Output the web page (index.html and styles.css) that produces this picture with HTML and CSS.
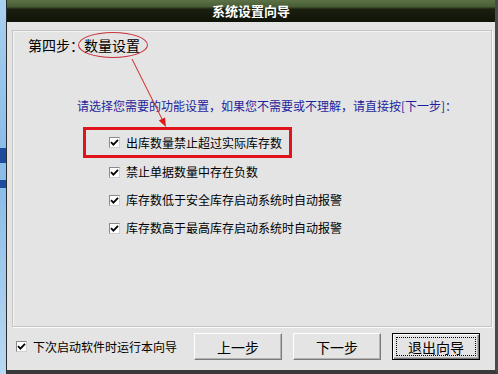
FILE: index.html
```html
<!DOCTYPE html>
<html lang="zh-CN">
<head>
  <meta charset="UTF-8">
  <title>系统设置向导</title>
  <link rel="stylesheet" href="styles.css">
</head>
<body>
  <div class="desktop"></div>

  <div class="window">
    <div class="title-bar">系统设置向导</div>

    <div class="panel">
      <div class="step">第四步：<span class="mark">数量设置</span></div>
      <p class="hint">请选择您需要的功能设置，如果您不需要或不理解，请直接按[下一步]：</p>

      <div class="options">
        <div class="option highlight">
          <span class="check"><svg width="9" height="9" viewBox="0 0 9 9"><path d="M1 4.2 L3.4 6.6 L8 1.8" fill="none" stroke="#000" stroke-width="1.8"/></svg></span>
          出库数量禁止超过实际库存数
        </div>
        <div class="option">
          <span class="check"><svg width="9" height="9" viewBox="0 0 9 9"><path d="M1 4.2 L3.4 6.6 L8 1.8" fill="none" stroke="#000" stroke-width="1.8"/></svg></span>
          禁止单据数量中存在负数
        </div>
        <div class="option">
          <span class="check"><svg width="9" height="9" viewBox="0 0 9 9"><path d="M1 4.2 L3.4 6.6 L8 1.8" fill="none" stroke="#000" stroke-width="1.8"/></svg></span>
          库存数低于安全库存启动系统时自动报警
        </div>
        <div class="option">
          <span class="check"><svg width="9" height="9" viewBox="0 0 9 9"><path d="M1 4.2 L3.4 6.6 L8 1.8" fill="none" stroke="#000" stroke-width="1.8"/></svg></span>
          库存数高于最高库存启动系统时自动报警
        </div>
      </div>
    </div>

    <div class="footer">
      <div class="startup">
        <span class="check"><svg width="9" height="9" viewBox="0 0 9 9"><path d="M1 4.2 L3.4 6.6 L8 1.8" fill="none" stroke="#000" stroke-width="1.8"/></svg></span>
        下次启动软件时运行本向导
      </div>
      <div class="buttons">
        <button class="btn">上一步</button>
        <button class="btn">下一步</button>
        <button class="btn default">退出向导</button>
      </div>
    </div>
  </div>

  <!-- annotation arrow drawn over the dialog -->
  <svg class="arrow" width="498" height="374" viewBox="0 0 498 374">
    <line x1="132" y1="59" x2="163" y2="121" stroke="#d42020" stroke-width="1"/>
    <polygon points="166,127 158.8,120.6 165,117.4" fill="#e01818"/>
  </svg>
</body>
</html>
```

FILE: styles.css
```css
/* Reset */
* {
  margin: 0;
  padding: 0;
  box-sizing: border-box;
}

body {
  position: relative;
  width: 498px;
  height: 374px;
  overflow: hidden;
  display: flex;
  font-family: "Noto Sans CJK SC", "Noto Sans", sans-serif;
  font-size: 12px;
  color: #000;
  background: #8fc0ea;
}

/* Desktop strip on the left */
.desktop {
  width: 6px;
  background: linear-gradient(to bottom,
    #a9d0f0 0, #8cbde8 148px,
    #1d4c9e 148px, #1d4c9e 163px,
    #8cbde8 163px, #8cbde8 180px,
    #1d4c9e 180px, #1d4c9e 188px,
    #8cbde8 188px, #b8d8f2 374px);
}

/* Dialog window */
.window {
  flex: 1;
  display: flex;
  flex-direction: column;
  background: #e4e4e4;
  border-left: 1px solid #2a2a2a;
  border-right: 3px solid #4a4a4a;
  border-bottom: 4px solid #3a3a3a;
}

.title-bar {
  height: 22px;
  line-height: 22px;
  text-align: center;
  color: #fff;
  font-size: 13px;
  font-weight: bold;
  background: linear-gradient(to bottom, #5c7246 0, #495d36 30%, #1a200f 42%, #0f1309 100%);
}

/* Group panel */
.panel {
  width: 480px;
  height: 297px;
  margin: 8px 0 0 5px;
  border: 1px solid #c4c4c4;
  box-shadow: inset 1px 1px 0 #f4f4f4, 1px 1px 0 #fafafa;
}

.step {
  display: flex;
  align-items: center;
  padding: 1px 0 0 15px;
  font-size: 14px;
  line-height: 16px;
}

.mark {
  display: inline-flex;
  align-items: center;
  width: 70px;
  height: 26px;
  margin-left: -6px;
  padding-left: 5px;
  border: 1px solid #c8323a;
  border-radius: 50%;
}

.hint {
  margin: 40px 0 0 64px;
  line-height: 16px;
  color: #1f1f9c;
  white-space: nowrap;
}

.options {
  margin: 13px 0 0 70px;
}

.option {
  display: flex;
  align-items: center;
  height: 28px;
  padding-left: 26px;
  line-height: 16px;
}

.option.highlight {
  width: 209px;
  height: 31px;
  padding-left: 23px;
  border: 3px solid #e0141c;
}

/* Classic check box */
.check {
  display: inline-flex;
  align-items: center;
  justify-content: center;
  width: 11px;
  height: 11px;
  margin-right: 6px;
  background: #fff;
  border: 1px solid;
  border-color: #8a8a8a #d0d0d0 #d0d0d0 #8a8a8a;
}

/* Footer with buttons */
.footer {
  display: flex;
  align-items: center;
  padding: 6px 15px 0 9px;
}

.startup {
  flex: 1;
  display: flex;
  align-items: center;
  line-height: 16px;
}

.buttons {
  display: flex;
  gap: 11px;
}

.btn {
  width: 88px;
  height: 27px;
  font-family: "Noto Sans CJK SC", "Noto Sans", sans-serif;
  font-size: 14px;
  color: #000;
  background: #e4e4e4;
  border: 1px solid;
  border-color: #fff #7a7a7a #7a7a7a #fff;
  box-shadow: inset -1px -1px 0 #b4b4b4;
}

.btn.default {
  border: 1px solid #000;
  box-shadow: inset 1px 1px 0 #fff, inset -1px -1px 0 #7a7a7a, inset -2px -2px 0 #b4b4b4;
  outline: 1px dotted #000;
  outline-offset: -5px;
}

.arrow {
  position: absolute;
  left: 0;
  top: 0;
  pointer-events: none;
}
```
